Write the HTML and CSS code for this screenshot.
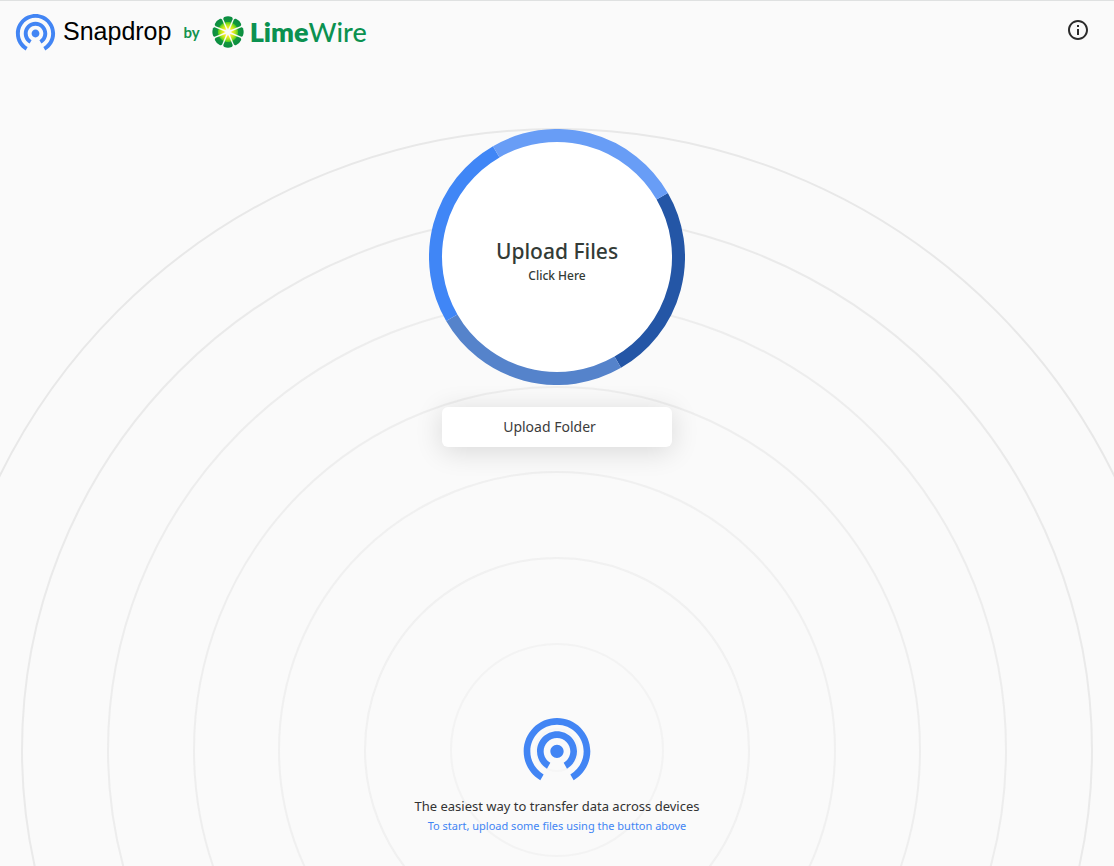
FILE: index.html
```
<!DOCTYPE html>
<html lang="en">
<head>
<meta charset="utf-8">
<meta name="viewport" content="width=device-width, initial-scale=1">
<title>Snapdrop</title>
<link rel="stylesheet" href="styles.css">
</head>
<body class="page">
<div class="backdrop" aria-hidden="true">
<svg class="rings" viewBox="-622 -622 1244 1244">
  <circle r="21" opacity=".2"/>
  <circle r="106" opacity=".4"/>
  <circle r="192" opacity=".5"/>
  <circle r="278" opacity=".55"/>
  <circle r="363" opacity=".65"/>
  <circle r="449" opacity=".75"/>
  <circle r="535" opacity=".9"/>
  <circle r="621"/>
</svg>
</div>
<header class="header">
  <a class="brand" href="#">
    <svg class="brand-icon" viewBox="0 0 24 24" aria-hidden="true"><use href="#beacon"/></svg>
    <span class="brand-name">Snapdrop</span>
  </a>
  <span class="by">by</span>
  <a class="partner" href="#">
    <svg class="lime" viewBox="-16 -16 32 32" aria-hidden="true">
      <defs>
        <radialGradient id="pulp" gradientUnits="userSpaceOnUse" cx="0" cy="0" r="16">
          <stop offset=".15" stop-color="#fff9b0"/>
          <stop offset=".3" stop-color="#f0ea1c"/>
          <stop offset=".45" stop-color="#b4e51c"/>
          <stop offset=".6" stop-color="#5ccf1e"/>
          <stop offset=".64" stop-color="#14993c"/>
          <stop offset="1" stop-color="#088a42"/>
        </radialGradient>
        <path id="wedge" d="M0-2 L-4.600-12.800 Q-5-14.200 -3.700-14.900 Q0-16.400 3.700-14.900 Q5-14.200 4.600-12.800Z" fill="url(#pulp)"/>
      </defs>
      <use href="#wedge"/>
      <use href="#wedge" transform="rotate(45)"/>
      <use href="#wedge" transform="rotate(90)"/>
      <use href="#wedge" transform="rotate(135)"/>
      <use href="#wedge" transform="rotate(180)"/>
      <use href="#wedge" transform="rotate(225)"/>
      <use href="#wedge" transform="rotate(270)"/>
      <use href="#wedge" transform="rotate(315)"/>
    </svg>
    <span class="partner-name"><b>Lime</b>Wire</span>
  </a>
  <button class="info" type="button" aria-label="About">
    <svg viewBox="0 0 24 24" aria-hidden="true"><path d="M11 17h2v-6h-2v6zm1-15C6.480 2 2 6.480 2 12s4.480 10 10 10 10-4.480 10-10S17.520 2 12 2zm0 18c-4.410 0-8-3.590-8-8s3.590-8 8-8 8 3.590 8 8-3.590 8-8 8zM11 9h2V7h-2v2z"/></svg>
  </button>
</header>
<main class="main">
  <button class="upload" type="button">
    <svg class="upload-ring" viewBox="-128 -128 256 256" aria-hidden="true">
      <circle r="121" fill="#fff"/>
      <g fill="none" stroke-width="13" transform="rotate(-30)">
        <path d="M121.500 0A121.500 121.500 0 0 1 0 121.500" stroke="#2456a6"/>
        <path d="M0 121.500A121.500 121.500 0 0 1-121.500 0" stroke="#5583cb"/>
        <path d="M-121.500 0A121.500 121.500 0 0 1 0-121.500" stroke="#4086f6"/>
        <path d="M0-121.500A121.500 121.500 0 0 1 121.500 0" stroke="#689df6"/>
      </g>
    </svg>
    <span class="upload-label">
      <span class="upload-title">Upload Files</span>
      <span class="upload-hint">Click Here</span>
    </span>
  </button>
  <button class="folder" type="button">Upload Folder</button>
</main>
<footer class="footer">
  <svg class="footer-icon" viewBox="0 0 24 24" aria-hidden="true">
    <path id="beacon" fill="#4285f4" d="M12 11c-1.100 0-2 .9-2 2s.9 2 2 2 2-.9 2-2-.9-2-2-2zm6 2c0-3.310-2.690-6-6-6s-6 2.690-6 6c0 2.220 1.210 4.150 3 5.190l1-1.740c-1.190-.7-2-1.970-2-3.450 0-2.210 1.790-4 4-4s4 1.790 4 4c0 1.480-.81 2.750-2 3.450l1 1.740c1.790-1.040 3-2.970 3-5.190zM12 3C6.480 3 2 7.480 2 13c0 3.700 2.010 6.920 4.990 8.650l1-1.730C5.610 18.530 4 15.960 4 13c0-4.420 3.580-8 8-8s8 3.580 8 8c0 2.960-1.610 5.530-4 6.920l1 1.730c2.990-1.730 5-4.950 5-8.650 0-5.520-4.480-10-10-10z"/>
  </svg>
  <p class="tagline">The easiest way to transfer data across devices</p>
  <p class="start">To start, upload some files using the button above</p>
</footer>
</body>
</html>
```
FILE: styles.css
```
* { box-sizing: border-box; }

.page {
  position: relative;
  display: flex;
  flex-direction: column;
  min-height: 100vh;
  margin: 0;
  border-top: 1px solid #dfe1e1;
  background: #fafafa;
  color: #333b36;
  font-family: "Noto Sans", "Open Sans", sans-serif;
}

/* Decorative rings behind the content, centred on the footer icon */
.backdrop {
  position: absolute;
  z-index: -1;
  inset: 0;
  overflow: hidden;
}
.rings {
  position: absolute;
  left: 50%;
  bottom: -506px;
  width: 1244px;
  height: 1244px;
  transform: translateX(-50%);
  fill: none;
  stroke: #e8e8e8;
  stroke-width: 2;
}

.header {
  display: flex;
  align-items: center;
  height: 60px;
  padding: 0 24px 0 12px;
}

.brand, .partner {
  display: flex;
  align-items: center;
  text-decoration: none;
}

.brand { gap: 4px; }
.brand-icon { width: 47px; height: 47px; }
.brand-name {
  color: #000;
  font: 25px/32px "Liberation Sans", Arial, sans-serif;
}

.by {
  margin: 2px 12px 0;
  color: #15934f;
  font: 700 15px/20px Lato, sans-serif;
}

.partner { gap: 6px; padding-top: 1px; }
.lime { width: 32px; height: 32px; }
.partner-name {
  color: #0b9150;
  font: 500 27px/32px Lato, sans-serif;
}
.partner-name b { font-weight: 800; }

.info {
  width: 24px;
  height: 24px;
  margin: 0 0 2px auto;
  padding: 0;
  border: 0;
  background: none;
  cursor: pointer;
}
.info svg { display: block; fill: #2b2b2b; }

.main {
  display: flex;
  flex: 1;
  flex-direction: column;
  align-items: center;
  gap: 22px;
  padding-top: 68px;
}

.upload {
  display: grid;
  place-items: center;
  width: 256px;
  height: 256px;
  padding: 0;
  border: 0;
  border-radius: 50%;
  background: none;
  color: inherit;
  font: inherit;
  cursor: pointer;
}
.upload-ring, .upload-label { grid-area: 1 / 1; }
.upload-ring { width: 100%; }
.upload-label {
  display: flex;
  flex-direction: column;
  padding-top: 8px;
}
.upload-title { font-size: 21px; font-weight: 500; line-height: 30px; }
.upload-hint { font-size: 12px; font-weight: 500; line-height: 20px; }

.folder {
  width: 230px;
  height: 40px;
  padding: 0 15px 0 0;
  border: 0;
  border-radius: 6px;
  background: #fff;
  box-shadow: 0 4px 28px rgba(0, 0, 0, .14);
  color: #3c3c3c;
  font: 14px/20px "Noto Sans", "Open Sans", sans-serif;
  cursor: pointer;
}

.footer {
  display: flex;
  flex-direction: column;
  align-items: center;
  padding-bottom: 30px;
}
.footer-icon { width: 80px; height: 80px; margin-bottom: 8px; }
.tagline, .start { margin: 0; line-height: 20px; text-align: center; }
.tagline { color: #333; font-size: 13px; }
.start { color: #4285f4; font-size: 11px; }
```
